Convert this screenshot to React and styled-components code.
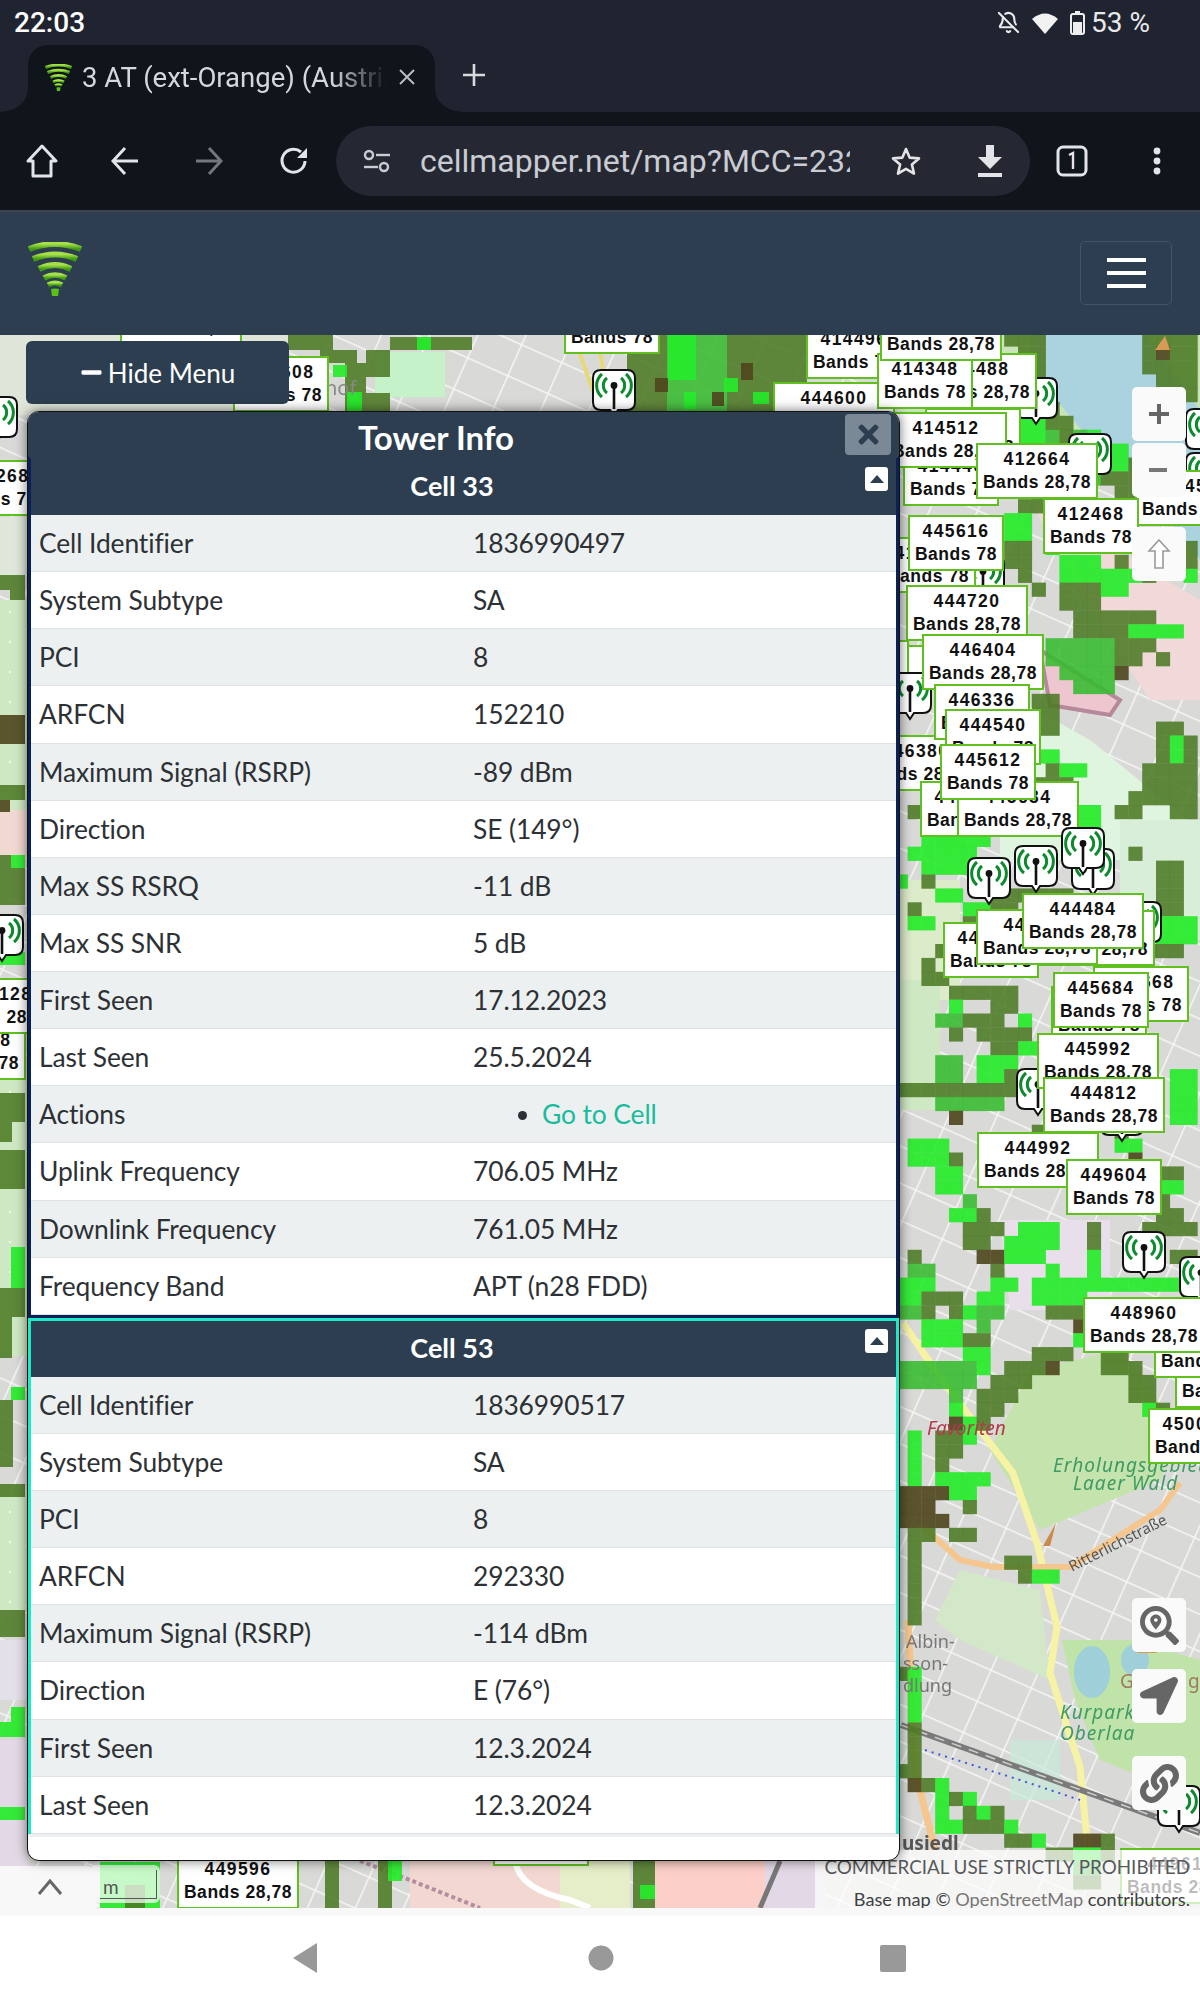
import React from "react";
import styled, { createGlobalStyle } from "styled-components";
import { BellOff } from "lucide-react";
import { FaLink, FaLocationArrow, FaSearchLocation, FaTimes, FaMinus } from "react-icons/fa";

const GlobalStyle = createGlobalStyle`
  html, body { margin: 0; padding: 0; background: #fff; }
  body { font-family: "Lato", "Noto Sans", sans-serif; color: #2b2f33; }
  * { box-sizing: border-box; }
`;

const Page = styled.div`
  width: 1200px;
  height: 2000px;
  display: flex;
  flex-direction: column;
  overflow: hidden;
`;

/* ---------- browser chrome ---------- */
const StatusBar = styled.div`
  height: 45px;
  background: #1f2430;
  color: #fff;
  display: flex;
  align-items: center;
  justify-content: space-between;
  padding: 0 50px 0 14px;
  font: 500 28px "Roboto", sans-serif;
`;
const StatusIcons = styled.div`
  display: flex;
  align-items: center;
  gap: 11px;
  color: #e8e9eb;
`;
const Percent = styled.span`
  margin-left: -5px;
  font-size: 28px;
  font-weight: 400;
`;
const TabStrip = styled.div`
  height: 67px;
  background: #1f2430;
  display: flex;
  align-items: flex-end;
  padding-left: 28px;
`;
const Tab = styled.div`
  position: relative;
  width: 407px;
  height: 67px;
  background: #10141b;
  border-radius: 20px 20px 0 0;
  display: flex;
  align-items: center;
  padding: 0 0 3px 17px;
  color: #d5d7db;
  font: 400 27.5px "Roboto", sans-serif;
  &::before, &::after {
    content: "";
    position: absolute;
    bottom: 0;
    width: 28px;
    height: 22px;
  }
  &::before {
    left: -28px;
    background: radial-gradient(ellipse 28px 22px at 0 0, transparent 97%, #10141b 100%);
  }
  &::after {
    right: -28px;
    background: radial-gradient(ellipse 28px 22px at 100% 0, transparent 97%, #10141b 100%);
  }
`;
const TabTitle = styled.span`
  width: 305px;
  margin-left: 10px;
  white-space: nowrap;
  overflow: hidden;
  -webkit-mask-image: linear-gradient(90deg, #000 82%, transparent 100%);
  mask-image: linear-gradient(90deg, #000 82%, transparent 100%);
`;
const TabClose = styled.span`
  margin-left: 10px;
  display: flex;
  color: #b9bcc2;
`;
const NewTab = styled.span`
  margin: 0 0 25px 27px;
  display: flex;
  color: #d8dade;
`;
const Toolbar = styled.div`
  height: 98px;
  background: #10141b;
  display: flex;
  align-items: center;
  position: relative;
  padding-left: 26px;
`;
const ToolIcon = styled.span`
  width: ${(p) => p.$w}px;
  margin-left: ${(p) => p.$ml || 0}px;
  display: flex;
  justify-content: flex-start;
  color: ${(p) => p.$c || "#e3e4e7"};
`;
const AddressBar = styled.div`
  width: 694px;
  height: 70px;
  margin: 0 26px 0 0;
  border-radius: 35px;
  background: #252833;
  display: flex;
  align-items: center;
  padding-left: 27px;
  color: #c9ccd2;
`;
const Url = styled.span`
  width: 430px;
  margin-left: 29px;
  overflow: hidden;
  white-space: nowrap;
  font: 400 32px "Roboto", sans-serif;
`;
const NavBar = styled.div`
  height: 125px;
  background: #2c3e50;
  border-top: 2px solid #3c434d;
  display: flex;
  align-items: center;
  justify-content: space-between;
  padding: 0 28px 0 28px;
`;
const Logo = styled.span`
  display: flex;
  margin-top: -10px;
`;
const Burger = styled.div`
  width: 92px;
  height: 64px;
  border: 1px solid #415469;
  border-radius: 5px;
  display: flex;
  flex-direction: column;
  align-items: center;
  justify-content: center;
  gap: 9px;
  margin-top: -1px;
  span {
    width: 39px;
    height: 4px;
    background: #fff;
    display: block;
  }
`;

/* ---------- map ---------- */
const MapArea = styled.div`
  position: relative;
  height: 1573px;
  overflow: hidden;
  background: #e4e6dc;
`;
const MapSvg = styled.svg`
  position: absolute;
  inset: 0;
  display: block;
  filter: blur(0.7px);
`;
const CellLabel = styled.div.attrs((p) => ({ style: { left: p.$x, top: p.$y - 335, width: p.$w } }))`
  position: absolute;
  height: 56px;
  background: #fff;
  border: 2px solid #5fc020;
  display: flex;
  flex-direction: column;
  align-items: center;
  justify-content: center;
  color: #111;
  font: 700 17.5px/23px "Liberation Sans", Arial, sans-serif;
  letter-spacing: 0.55px;
  white-space: nowrap;
`;
const LabelId = styled.span`
  letter-spacing: 1.4px;
`;
const PinBox = styled.svg.attrs((p) => ({ style: { left: p.$x, top: p.$y - 335 } }))`
  position: absolute;
  width: 44px;
  height: 50px;
`;
const HideMenu = styled.div`
  position: absolute;
  left: 26px;
  top: 6px;
  width: 263px;
  height: 63px;
  background: #2c3e50;
  border-radius: 6px;
  color: #fff;
  font-size: 26px;
  display: flex;
  align-items: center;
  justify-content: center;
  gap: 5px;
`;
const Panel = styled.div`
  position: absolute;
  left: 27px;
  top: 76px;
  width: 873px;
  height: 1450px;
  background: #fff;
  border-radius: 12px;
  border: 1px solid #111;
  overflow: hidden;
  box-shadow: 0 0 12px rgba(0, 0, 0, 0.55);
`;
const PanelHead = styled.div`
  height: 44px;
  background: #2c3e50;
  position: relative;
  color: #fff;
  display: flex;
  justify-content: center;
  padding-right: 55px;
  font-size: 33px;
  font-weight: 700;
  line-height: 50px;
`;
const CloseBtn = styled.div`
  position: absolute;
  right: 8px;
  top: 2px;
  width: 46px;
  height: 41px;
  border-radius: 4px;
  background: #7b8996;
  color: #2c3e50;
  display: flex;
  align-items: center;
  justify-content: center;
  font-size: 29px;
`;
const Card = styled.div`
  border: 3px solid ${(p) => p.$c};
  border-top-color: ${(p) => p.$top};
  border-bottom-width: ${(p) => p.$bb}px;
  background: #fff;
`;
const CellHead = styled.div`
  position: relative;
  height: 56px;
  background: #2c3e50;
  color: #fff;
  display: flex;
  align-items: center;
  justify-content: center;
  padding-right: 23px;
  font-size: 27px;
  font-weight: 700;
  padding-bottom: 3px;
`;
const Toggle = styled.div`
  position: absolute;
  right: 8px;
  top: 8px;
  width: 23px;
  height: 24px;
  border-radius: 3px;
  background: #fff;
  display: flex;
  align-items: center;
  justify-content: center;
  &::after {
    content: "";
    border: 7px solid transparent;
    border-top: 0;
    border-bottom: 8px solid #2c3e50;
  }
`;
const Row = styled.div`
  height: 57.14px;
  display: grid;
  grid-template-columns: 434px 1fr;
  align-items: center;
  padding: 0 0 0 8px;
  background: ${(p) => (p.$odd ? "#ecf0f1" : "#fff")};
  border-bottom: 1px solid #dee2e6;
  font-size: 26.4px;
  color: #2d3135;
  letter-spacing: -0.1px;
  white-space: nowrap;
`;
const Bullet = styled.ul`
  margin: 0;
  padding: 0 0 0 69px;
  li::marker { color: #2d3135; }
`;
const CellLink = styled.a`
  color: #18bc9c;
`;
const Peek = styled.div`
  height: 3px;
  background: #ecf0f1;
`;
const MapButton = styled.div`
  position: absolute;
  left: 1132px;
  top: ${(p) => p.$top - 335}px;
  width: 54px;
  height: 54px;
  background: #fafafa;
  border-radius: 5px;
  color: #666;
  display: flex;
  align-items: center;
  justify-content: center;
`;
const Attribution = styled.div`
  position: absolute;
  right: 0;
  bottom: 0;
  width: 385px;
  height: 58px;
  background: rgba(255, 255, 255, 0.72);
  color: #56595c;
  font-size: 18.8px;
  line-height: 30px;
  padding: 2px 10px 0 0;
  text-align: right;
  white-space: nowrap;
  div + div { margin-top: 2px; color: #3d4043; font-size: 18.2px; }
  span { color: #777; }
`;
const Expander = styled.div`
  position: absolute;
  left: 0;
  bottom: 0;
  width: 100px;
  height: 42px;
  background: #f8f8f8;
  border-radius: 0 14px 0 0;
  display: flex;
  align-items: center;
  justify-content: center;
`;
const Scale = styled.div`
  position: absolute;
  left: 90px;
  bottom: 5px;
  width: 70px;
  height: 38px;
  background: rgba(255, 255, 255, 0.72);
  border-radius: 6px;
  font-size: 19px;
  color: #555;
  padding: 10px 0 0 13px;
  &::after {
    content: "";
    position: absolute;
    left: 10px;
    right: 3px;
    top: 5px;
    bottom: 4px;
    border: 1px solid #555;
    border-top: 0;
    border-left: 0;
  }
`;
const BottomNav = styled.div`
  flex: 1;
  background: #fff;
  border-top: 8px solid #f8f8f8;
  display: flex;
  align-items: center;
  padding-left: 293px;
  color: #999;
`;
const NavSlot = styled.span`
  width: ${(p) => p.$w}px;
  display: flex;
`;

/* ---------- drawings ---------- */
const Wifi = ({ w, h }) => (
  <svg width={w} height={h} viewBox="0 0 54 54">
    <defs>
      <linearGradient id={`lg${w}`} x1="0" y1="0" x2="0" y2="1">
        <stop offset="0" stopColor="#a6e04a" />
        <stop offset="1" stopColor="#3f9a10" />
      </linearGradient>
    </defs>
    <g fill="none" stroke={`url(#lg${w})`}>
      <path d="M1 7 Q27 -3 53 7" strokeWidth="6" />
      <path d="M5 17 Q27 8 49 17" strokeWidth="6" />
      <path d="M11 27 Q27 19 43 27" strokeWidth="6" />
      <path d="M16 36 Q27 30 38 36" strokeWidth="5.5" />
      <path d="M20 43 Q27 39 34 43" strokeWidth="5" />
    </g>
    <path d="M23 47 Q27 46 31 47 L30 54 H24 Z" fill="#5cc21a" />
  </svg>
);

const Tower = ({ x, y }) => (
  <PinBox $x={x} $y={y} viewBox="0 0 44 50">
    <path
      d="M9 1 H35 Q43 1 43 9 V33 Q43 41 35 41 H26 L22 47 L18 41 H9 Q1 41 1 33 V9 Q1 1 9 1 Z"
      fill="#fff"
      stroke="#111"
      strokeWidth="2"
    />
    <g fill="none" stroke="#0b8a2e" strokeWidth="3">
      <path d="M15 9 A9.5 9.5 0 0 0 15 24" />
      <path d="M10 5 A15 15 0 0 0 10 28" />
      <path d="M29 9 A9.5 9.5 0 0 1 29 24" />
      <path d="M34 5 A15 15 0 0 1 34 28" />
    </g>
    <circle cx="22" cy="16.5" r="3.4" fill="#111" />
    <path d="M22 17 V40" stroke="#111" strokeWidth="2.6" />
  </PinBox>
);

const CSIZE_X = 13.8;
const CSIZE_Y = 13.9;
const COLORS = { G: "#26ea2a", g: "#35bb2f", d: "#4c7a24", b: "#50481e" };
const OPACITY = { G: 0.92, g: 0.88, d: 0.88, b: 0.92 };

// green coverage squares, one string per row, columns from x=880
const GRID = [
  ".........ddd.......dddd",
  "..........dd.......dbdd",
  "..........dd.......dddd",
  "...........d........ddd",
  "...........d.........dd",
  "...........gd..........",
  "..........GGdd.........",
  "..........GGgdgG.......",
  "............ddgGGG.....",
  "...........dddgGGGd....",
  "...........d..ggddd....",
  "...........d.....dd....",
  "..........dd...........",
  ".........GG............",
  ".........GG.G..........",
  ".........dd.G.........d",
  ".........dd..GGG.d....d",
  "..........d..GGGGGGd..G",
  "...........d.dddGG.....",
  ".............ddd.......",
  "..............dddddd...",
  "..............ddddGGGG.",
  "............gggggddd...",
  "............gggggdd.d..",
  ".............ggggb.....",
  "..............ggg......",
  "...........dd..........",
  "...........dd..........",
  "...........dd.......dd.",
  "....................dGd",
  "...........GG.......dGd",
  "............dGG....dddd",
  "...........ddd.....dddd",
  "...........ddd....ddddd",
  "..d...........GG.dd..dd",
  "...dd.........GG.......",
  "...GGGGG...............",
  "..GGGGG...........d....",
  "...GGGG.............dd.",
  ".G.d................dd.",
  "....GG..dddddd......dd.",
  "..d...GGdd.........ddd.",
  "..GG..d.............GGG",
  "....................GGG",
  "....d..............ddd.",
  "...d...................",
  "...dd..................",
  ".....ddddd.............",
  ".....G..dd.............",
  "....ggddd.G............",
  ".....d.dddd............",
  "........ddGG...........",
  "....gg.GGG.............",
  "....gg.GGd...........GG",
  ".ddddddddd...........GG",
  "....ggggg............GG",
  ".....b...............GG",
  "...........d.....d.....",
  "..GGG............GG....",
  "..GGGd............b....",
  "....GG..............dd.",
  "....GG..............GG.",
  "......g.............d..",
  ".....GGd............dd.",
  "......ddd.GGG..d...dddd",
  "......dd.GGGG..d.......",
  "..d....bbGGG...G.....dd",
  "..gg....d...G..G.......",
  ".GGG....GG.GGGGGGGGGGGG",
  ".GGddd.GG..GGGG........",
  ".ggd.dGgg...ddd........",
  "...GGG.g......b........",
  "...GGGdd......GG.......",
  "......GG...ddd..dd.....",
  ".ggggggG.dddb...ddd....",
  ".gggggg.ddd.......dd...",
  ".....g.ddd........dd...",
  ".....G.dd..........Gd..",
  ".....bGd...............",
  "..G.ddG................",
  "..G.dd.................",
  "..G.d..................",
  "..G.GGGG...............",
  ".bbbbGG................",
  ".bbb..d................",
  ".bbbb..................",
  "..dd.dd................",
  "..d....................",
  "..d......dd............",
  "..d.......dGG..........",
  "..d....................",
  "..d....................",
  "..d....................",
  ".......................",
  ".......................",
  ".......................",
  ".dG....................",
  "..G....................",
  "..G....................",
  "..G....................",
  "..d....................",
  "..d....................",
  "..d....................",
  ".dd....................",
  "..bdG..................",
  "....GdG................",
  "....G.dGd..............",
  "....GGdddG.............",
  ".........ddG..bbd......",
  "............ddGGd......",
  "..............gg.......",
  "..............dd.......",
];

// [x, y, w, h, colour key] squares outside the grid above
const BLOCKS = [
  [288, 335, 45, 15, "d"], [320, 350, 37, 13, "d"], [345, 363, 21, 30, "d"], [345, 393, 45, 18, "d"],
  [366, 350, 24, 27, "d"], [390, 337, 82, 13, "d"], [417, 337, 14, 13, "G"], [333, 365, 14, 12, "G"],
  [347, 392, 15, 19, "G"], [627, 335, 40, 76, "d"], [667, 335, 60, 76, "g"], [727, 335, 80, 76, "d"],
  [668, 335, 28, 45, "G"], [724, 378, 14, 14, "G"],
  [684, 392, 12, 17, "G"], [753, 392, 16, 12, "G"], [655, 378, 13, 14, "b"], [741, 363, 12, 17, "b"],
  [712, 392, 12, 14, "b"], [860, 335, 20, 40, "G"],
  [0, 575, 25, 15, "d"], [10, 590, 15, 10, "d"], [0, 715, 25, 29, "b"], [0, 785, 25, 15, "d"],
  [0, 800, 10, 12, "b"], [11, 855, 14, 13, "G"], [0, 855, 11, 13, "d"], [0, 868, 25, 37, "d"],
  [0, 952, 25, 13, "G"], [0, 1093, 25, 29, "d"], [0, 1122, 12, 20, "d"], [0, 1150, 25, 39, "d"],
  [11, 1247, 14, 41, "G"], [0, 1288, 25, 29, "d"], [0, 1317, 12, 41, "d"], [11, 1387, 14, 13, "G"],
  [0, 1400, 13, 67, "d"], [0, 1484, 25, 13, "d"], [0, 1610, 25, 27, "d"], [11, 1707, 14, 15, "G"],
  [0, 1722, 25, 15, "G"], [0, 1807, 25, 13, "G"],
  [100, 1862, 60, 46, "G"], [125, 1885, 20, 23, "d"], [325, 1861, 14, 47, "d"], [378, 1861, 14, 47, "d"],
  [388, 1861, 14, 20, "G"], [633, 1861, 22, 47, "d"], [640, 1885, 15, 14, "G"],
];

const L = (x, y, id, band) => ({ x, y, id, band });
const P = (x, y) => ({ x, y, pin: true });
const B78 = "Bands 78";
const B28 = "Bands 28,78";

// back to front, the order they overlap on the map
const MARKS = [
  L(120, 288, "445620", B28), L(233, 356, "445608", B78), L(-52, 460, "445268", B78),
  P(-26, 396), P(-20, 914), L(-70, 1024, "445178", B78), L(-62, 978, "445128", B28),
  L(564, 298, "414372", B78), P(592, 369),
  L(806, 323, "414496", B78), L(773, 382, "444600", B28), P(1014, 377),
  L(915, 353, "414488", B28), L(877, 353, "414348", B78), L(880, 305, "414480", B28),
  L(925, 408, "414508", B78), P(1185, 408), P(1185, 452), P(1068, 433),
  L(903, 450, "414440", B78), L(885, 412, "414512", B28), L(976, 443, "412664", B28),
  L(1135, 470, "414555", B28), L(1043, 498, "412468", B78),
  P(961, 555), L(880, 537, "414476", B78), L(908, 515, "445616", B78),
  L(810, 645, "444528", B28), L(787, 640, "444628", B28), P(888, 672),
  L(906, 585, "444720", B28), L(922, 634, "446404", B28),
  L(855, 735, "446380", B28), L(934, 684, "446336", B78), L(945, 709, "444540", B78),
  L(920, 781, "445624", B78), L(957, 781, "445634", B28), L(940, 744, "445612", B78),
  P(1071, 848), P(1061, 827), P(1014, 845), P(967, 857), P(1118, 901),
  L(1033, 910, "444588", B28), L(943, 922, "444528", B78), L(976, 909, "444468", B28),
  L(1022, 893, "444484", B28), L(1093, 966, "445668", B78), L(1051, 986, "445680", B78),
  L(1053, 972, "445684", B78), P(1016, 1068), L(1037, 1033, "445992", B28), P(1100, 1094),
  L(1043, 1077, "444812", B28), L(977, 1132, "444992", B28), L(1066, 1159, "449604", B78),
  P(1122, 1231), P(1179, 1256), L(1175, 1352, "450016", B78), L(1154, 1322, "450012", B78),
  L(1083, 1297, "448960", B28), L(1148, 1408, "450040", B78),
  L(493, 1810, "449600", B78), L(177, 1853, "449596", B28), P(1157, 1785), L(1120, 1848, "449616", B28),
];

const MapDrawing = () => {
  const cells = [];
  GRID.forEach((row, r) => {
    [...row].forEach((ch, c) => {
      if (ch !== ".") {
        cells.push(
          <rect key={`${r}-${c}`} x={880 + c * CSIZE_X} y={332.4 + r * CSIZE_Y} width={CSIZE_X + 0.3} height={CSIZE_Y + 0.3} fill={COLORS[ch]} opacity={OPACITY[ch]} />
        );
      }
    });
  });
  return (
    <MapSvg width="1200" height="1573" viewBox="0 335 1200 1573">
      <defs>
        <pattern id="blocks" width="44" height="34" patternUnits="userSpaceOnUse" patternTransform="rotate(24)">
          <rect width="44" height="34" fill="#d9d9d7" />
          <path d="M0 0 H44 M0 0 V34" stroke="#f6f6f6" strokeWidth="3" />
        </pattern>
        <pattern id="parkdots" width="30" height="30" patternUnits="userSpaceOnUse">
          <rect width="30" height="30" fill="#cfe8c4" />
          <circle cx="10" cy="12" r="1.2" fill="#eef8ea" />
        </pattern>
      </defs>
      <rect x="0" y="335" width="1200" height="1573" fill="url(#blocks)" />
      {/* left strip */}
      <rect x="0" y="517" width="27" height="60" fill="#dfe6da" />
      <rect x="0" y="600" width="27" height="220" fill="url(#parkdots)" />
      <rect x="0" y="810" width="27" height="50" fill="#f1d9d2" />
      <rect x="0" y="1076" width="27" height="280" fill="url(#parkdots)" />
      <rect x="0" y="1490" width="27" height="120" fill="url(#parkdots)" />
      <rect x="0" y="1640" width="27" height="60" fill="#e4e0ea" />
      <rect x="0" y="1740" width="27" height="168" fill="#e3d9e6" />
      {/* top strip */}
      <rect x="0" y="335" width="290" height="80" fill="#dfe5d8" />
      <rect x="375" y="352" width="70" height="45" fill="#c5f2c8" />
      <path d="M575 340 L600 411 M598 340 L610 411" stroke="#e6d97a" strokeWidth="4" fill="none" />
      {/* right side zones */}
      <rect x="900" y="335" width="300" height="130" fill="#c9e4b8" />
      <polygon points="1033,335 1146,335 1200,410 1200,560 1130,470 1090,440 1033,372" fill="#aad3df" />
      <polygon points="1030,500 1200,600 1200,700 1150,700 1090,610" fill="#f1d9d9" />
      <polygon points="1040,650 1120,700 1110,715 1050,705" fill="#eec6d0" stroke="#b5889a" strokeWidth="4" />
      <polygon points="1000,690 1090,740 1200,830 1200,860 1110,860 1000,860" fill="#dff5df" />
      <rect x="900" y="880" width="60" height="120" fill="#dcebc9" />
      <rect x="900" y="980" width="40" height="130" fill="#cfe8c4" />
      <rect x="1120" y="820" width="80" height="120" fill="#d8eed8" />
      <polygon points="1000,1220 1110,1220 1110,1310 1010,1310" fill="#e9dfea" />
      <polygon points="1030,1370 1120,1350 1180,1430 1160,1480 1040,1530 990,1450" fill="#c5e3ac" />
      <polygon points="960,1570 1040,1590 1050,1680 960,1640 935,1620" fill="#d3e8c8" />
      <polygon points="1062,1640 1130,1640 1200,1660 1200,1800 1100,1760 1075,1700" fill="#bfe3a9" />
      <ellipse cx="1092" cy="1672" rx="18" ry="26" fill="#9fcfd8" />
      <ellipse cx="1135" cy="1660" rx="14" ry="16" fill="#9fcfd8" />
      <rect x="1010" y="1740" width="50" height="60" fill="#c8e8d8" opacity="0.7" />
      {/* bottom strip */}
      <rect x="300" y="1861" width="110" height="47" fill="url(#blocks)" />
      <rect x="410" y="1861" width="150" height="47" fill="#f3d8d2" />
      <rect x="560" y="1861" width="70" height="47" fill="#e6eec9" />
      <rect x="655" y="1861" width="110" height="47" fill="#fccfc8" />
      <rect x="765" y="1861" width="60" height="47" fill="#e3d9e6" />
      <path d="M515 1861 Q520 1890 570 1900 L590 1908" stroke="#fff" strokeWidth="6" fill="none" />
      <path d="M360 1861 L410 1880 L480 1908" stroke="#b58ca0" strokeWidth="4" strokeDasharray="4 3" fill="none" />
      <path d="M780 1861 L760 1908" stroke="#777" strokeWidth="5" fill="none" />
      {/* roads */}
      <path d="M903 1323 L937 1373 L980 1430 L1013 1473 L1037 1543 L1057 1627 L1050 1673 L1080 1767 L1088 1850" stroke="#f6f3a4" strokeWidth="7" fill="none" />
      <path d="M923 1527 L960 1560 L993 1567 L1070 1567 L1160 1510 L1180 1483" stroke="#f5c68e" strokeWidth="6" fill="none" />
      <path d="M908 1620 L915 1770 L935 1850" stroke="#f5c68e" strokeWidth="7" fill="none" />
      <path d="M901 1725 L1200 1833" stroke="#7a7a7a" strokeWidth="6" fill="none" />
      <path d="M901 1725 L1200 1833" stroke="#cfcfcf" strokeWidth="1.5" strokeDasharray="10 8" fill="none" />
      <path d="M925 1750 L1020 1780 L1080 1800" stroke="#3d5ad6" strokeWidth="2" strokeDasharray="2 5" fill="none" />
      {cells}
      {BLOCKS.map(([x, y, w, h, k], i) => (
        <rect key={i} x={x} y={y} width={w} height={h} fill={COLORS[k]} opacity={OPACITY[k]} />
      ))}
      <polygon points="1043,1546 1056,1523 1050,1546" fill="#c98a4a" />
      <polygon points="1155,350 1170,350 1165,336" fill="#d99a55" />
      <polygon points="1137,1653 1157,1653 1147,1639" fill="#d99a55" />
      <g fontFamily="'Noto Sans', sans-serif" fontStyle="italic" fontSize="19" fill="#3f9a64">
        <text x="1053" y="1472" letterSpacing="1">Erholungsgebiet</text>
        <text x="1073" y="1490" letterSpacing="1">Laaer Wald</text>
        <text x="1060" y="1719" letterSpacing="1">Kurpark</text>
        <text x="1060" y="1740" letterSpacing="1">Oberlaa</text>
      </g>
      <text x="927" y="1435" fontFamily="'Noto Sans', sans-serif" fontStyle="italic" fontSize="19" fill="#b33a4a">Favoriten</text>
      <text x="1072" y="1572" fontFamily="'Noto Sans', sans-serif" fontSize="15" fill="#555" transform="rotate(-27 1072 1572)">Ritterlichstraße</text>
      <g fontFamily="'Noto Sans', sans-serif" fontSize="18" fill="#777">
        <text x="906" y="1648">Albin-</text>
        <text x="903" y="1670">sson-</text>
        <text x="903" y="1692">dlung</text>
      </g>
      <text x="902" y="1850" fontFamily="'Noto Sans', sans-serif" fontWeight="700" fontSize="19" fill="#555">usiedl</text>
      <text x="1120" y="1688" fontFamily="'Noto Sans', sans-serif" fontSize="19" fill="#a07a60">G</text>
      <text x="1188" y="1688" fontFamily="'Noto Sans', sans-serif" fontSize="19" fill="#a07a60">g</text>
      <text x="325" y="395" fontFamily="'Noto Sans', sans-serif" fontSize="20" fill="#888">hof</text>
    </MapSvg>
  );
};

const CELL_33 = [
  ["Cell Identifier", "1836990497"],
  ["System Subtype", "SA"],
  ["PCI", "8"],
  ["ARFCN", "152210"],
  ["Maximum Signal (RSRP)", "-89 dBm"],
  ["Direction", "SE (149°)"],
  ["Max SS RSRQ", "-11 dB"],
  ["Max SS SNR", "5 dB"],
  ["First Seen", "17.12.2023"],
  ["Last Seen", "25.5.2024"],
  ["Actions", null],
  ["Uplink Frequency", "706.05 MHz"],
  ["Downlink Frequency", "761.05 MHz"],
  ["Frequency Band", "APT (n28 FDD)"],
];

const CELL_53 = [
  ["Cell Identifier", "1836990517"],
  ["System Subtype", "SA"],
  ["PCI", "8"],
  ["ARFCN", "292330"],
  ["Maximum Signal (RSRP)", "-114 dBm"],
  ["Direction", "E (76°)"],
  ["First Seen", "12.3.2024"],
  ["Last Seen", "12.3.2024"],
];

const CellTable = ({ title, rows, color, top, bottom }) => (
  <Card $c={color} $top={top} $bb={bottom}>
    <CellHead>
      {title}
      <Toggle />
    </CellHead>
    {rows.map(([k, v], i) => (
      <Row key={k} $odd={i % 2 === 0}>
        <span>{k}</span>
        {v !== null ? (
          <span>{v}</span>
        ) : (
          <Bullet>
            <li>
              <CellLink>Go to Cell</CellLink>
            </li>
          </Bullet>
        )}
      </Row>
    ))}
  </Card>
);

export default function App() {
  return (
    <Page>
      <GlobalStyle />
      <StatusBar>
        <span>22:03</span>
        <StatusIcons>
          <BellOff size={23} strokeWidth={2.2} />
          <svg width="28" height="24" viewBox="0 0 28 24">
            <path d="M14 23 L1 8 Q14 -3 27 8 Z" fill="#f2f2f2" />
          </svg>
          <svg width="15" height="24" viewBox="0 0 15 24">
            <rect x="1" y="3" width="13" height="20" rx="2" fill="none" stroke="#eee" strokeWidth="2" />
            <rect x="5" y="0" width="5" height="3" fill="#eee" />
            <rect x="3" y="11" width="9" height="11" fill="#eee" />
          </svg>
          <Percent>53 %</Percent>
        </StatusIcons>
      </StatusBar>
      <TabStrip>
        <Tab>
          <Wifi w={27} h={27} />
          <TabTitle>3 AT (ext-Orange) (Austria)</TabTitle>
          <TabClose>
            <svg width="20" height="20" viewBox="0 0 20 20">
              <path d="M3 3 L17 17 M17 3 L3 17" stroke="currentColor" strokeWidth="2" />
            </svg>
          </TabClose>
        </Tab>
        <NewTab>
          <svg width="24" height="24" viewBox="0 0 24 24">
            <path d="M12 1 V23 M1 12 H23" stroke="currentColor" strokeWidth="2.6" />
          </svg>
        </NewTab>
      </TabStrip>
      <Toolbar>
        <ToolIcon $w={85}>
          <svg width="32" height="34" viewBox="0 0 32 34">
            <path d="M16 2 L30 17 H25 V32 H7 V17 H2 Z" fill="none" stroke="currentColor" strokeWidth="3" strokeLinejoin="round" />
          </svg>
        </ToolIcon>
        <ToolIcon $w={84}>
          <svg width="28" height="30" viewBox="0 0 28 30">
            <path d="M14 2 L2 15 L14 28 M2 15 H27" fill="none" stroke="currentColor" strokeWidth="3" />
          </svg>
        </ToolIcon>
        <ToolIcon $w={84} $c="#74777d">
          <svg width="28" height="30" viewBox="0 0 28 30">
            <path d="M14 2 L26 15 L14 28 M26 15 H1" fill="none" stroke="currentColor" strokeWidth="3" />
          </svg>
        </ToolIcon>
        <ToolIcon $w={57}>
          <svg width="30" height="30" viewBox="0 0 30 30">
            <path d="M26 15 A11.5 11.5 0 1 1 22 6" fill="none" stroke="currentColor" strokeWidth="3" />
            <path d="M28 2 V12 H18 Z" fill="currentColor" />
          </svg>
        </ToolIcon>
        <AddressBar>
          <svg width="28" height="24" viewBox="0 0 28 24">
            <g fill="none" stroke="currentColor" strokeWidth="2.4">
              <circle cx="6" cy="6" r="4" />
              <path d="M13 6 H27" />
              <circle cx="21" cy="18" r="4" />
              <path d="M1 18 H15" />
            </g>
          </svg>
          <Url>cellmapper.net/map?MCC=232&amp;MNC=10</Url>
          <ToolIcon $w={85} $ml={41}>
            <svg width="30" height="30" viewBox="0 0 30 30">
              <path d="M15 3 L18.6 11.6 L28 12.4 L20.9 18.5 L23 27.6 L15 22.8 L7 27.6 L9.1 18.5 L2 12.4 L11.4 11.6 Z" fill="none" stroke="#e3e4e7" strokeWidth="2.6" strokeLinejoin="round" />
            </svg>
          </ToolIcon>
          <ToolIcon $w={30}>
            <svg width="28" height="32" viewBox="0 0 28 32">
              <path d="M10 0 H18 V12 H26 L14 24 L2 12 H10 Z M2 28 H26 V32 H2 Z" fill="currentColor" />
            </svg>
          </ToolIcon>
        </AddressBar>
        <ToolIcon $w={97}>
          <svg width="32" height="32" viewBox="0 0 32 32">
            <rect x="2" y="2" width="28" height="28" rx="5" fill="none" stroke="currentColor" strokeWidth="3" />
            <path d="M13 10 L17 8 V24" fill="none" stroke="currentColor" strokeWidth="2.4" />
          </svg>
        </ToolIcon>
        <ToolIcon $w={10}>
          <svg width="8" height="28" viewBox="0 0 8 28">
            <circle cx="4" cy="4" r="3.4" fill="currentColor" />
            <circle cx="4" cy="14" r="3.4" fill="currentColor" />
            <circle cx="4" cy="24" r="3.4" fill="currentColor" />
          </svg>
        </ToolIcon>
      </Toolbar>
      <NavBar>
        <Logo>
          <Wifi w={54} h={54} />
        </Logo>
        <Burger>
          <span />
          <span />
          <span />
        </Burger>
      </NavBar>
      <MapArea>
        <MapDrawing />
        {MARKS.map((m, i) =>
          m.pin ? (
            <Tower key={i} x={m.x} y={m.y} />
          ) : (
            <CellLabel key={i} $x={m.x} $y={m.y} $w={m.band === B78 ? 96 : 122}>
              <LabelId>{m.id}</LabelId>
              <span>{m.band}</span>
            </CellLabel>
          )
        )}
        <MapButton $top={387}>
          <svg width="24" height="24" viewBox="0 0 24 24">
            <path d="M12 2 V22 M2 12 H22" stroke="#666" strokeWidth="4" />
          </svg>
        </MapButton>
        <MapButton $top={443}>
          <svg width="24" height="24" viewBox="0 0 24 24">
            <path d="M2 12 H20" stroke="#777" strokeWidth="4" />
          </svg>
        </MapButton>
        <MapButton $top={527}>
          <svg width="24" height="32" viewBox="0 0 24 32">
            <path d="M12 2 L22 13 H16 V30 H8 V13 H2 Z" fill="#fff" stroke="#999" strokeWidth="1.6" />
          </svg>
        </MapButton>
        <MapButton $top={1598}>
          <FaSearchLocation size={39} />
        </MapButton>
        <MapButton $top={1669}>
          <FaLocationArrow size={38} />
        </MapButton>
        <MapButton $top={1756}>
          <FaLink size={39} />
        </MapButton>
        <Attribution>
          <div>COMMERCIAL USE STRICTLY PROHIBITED</div>
          <div>
            Base map © <span>OpenStreetMap</span> contributors.
          </div>
        </Attribution>
        <Scale>m</Scale>
        <Expander>
          <svg width="26" height="16" viewBox="0 0 26 16">
            <path d="M2 15 L13 2 L24 15" fill="none" stroke="#666" strokeWidth="3" />
          </svg>
        </Expander>
        <HideMenu>
          <FaMinus size={23} />
          <span>Hide Menu</span>
        </HideMenu>
        <Panel>
          <PanelHead>
            Tower Info
            <CloseBtn>
              <FaTimes />
            </CloseBtn>
          </PanelHead>
          <CellTable title="Cell 33" rows={CELL_33} color="#0a2158" top="#2c3e50" bottom={3} />
          <CellTable title="Cell 53" rows={CELL_53} color="#1de9c6" top="#1de9c6" bottom={0} />
          <Peek />
        </Panel>
      </MapArea>
      <BottomNav>
        <NavSlot $w={295}>
          <svg width="24" height="30" viewBox="0 0 24 30">
            <path d="M24 0 V30 L0 15 Z" fill="currentColor" />
          </svg>
        </NavSlot>
        <NavSlot $w={292}>
          <svg width="26" height="26" viewBox="0 0 26 26">
            <circle cx="13" cy="13" r="12.5" fill="currentColor" />
          </svg>
        </NavSlot>
        <NavSlot $w={30}>
          <svg width="26" height="27" viewBox="0 0 26 27">
            <rect width="26" height="27" rx="2" fill="currentColor" />
          </svg>
        </NavSlot>
      </BottomNav>
    </Page>
  );
}
